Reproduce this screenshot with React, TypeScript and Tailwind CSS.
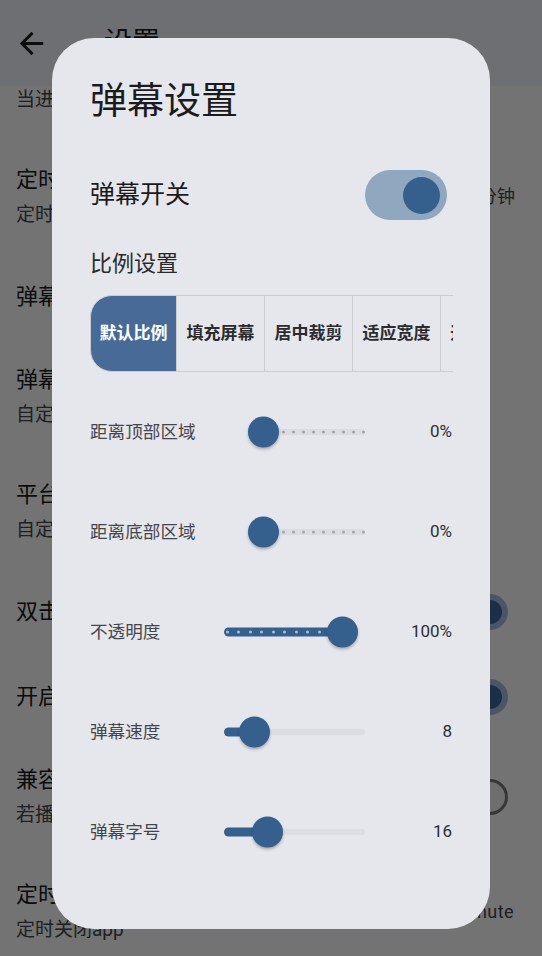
import type { ReactNode } from "react";

interface PageItem {
  title: string;
  sub?: string;
  right?: ReactNode;
}

const pageItems: PageItem[] = [
  { title: "自动全屏", sub: "当进入直播间时自动全屏播放" },
  {
    title: "定时刷新",
    sub: "定时刷新关注列表",
    right: <span className="pr-[27px] text-[18px] text-[#44474e]">10分钟</span>,
  },
  { title: "弹幕屏蔽" },
  { title: "弹幕设置", sub: "自定义弹幕样式" },
  { title: "平台设置", sub: "自定义平台显示顺序" },
  { title: "双击全屏", right: <PageSwitch on /> },
  { title: "开启硬件解码", right: <PageSwitch on /> },
  { title: "兼容模式", sub: "若播放卡顿可尝试开启", right: <PageSwitch /> },
  {
    title: "定时关闭",
    sub: "定时关闭app",
    right: <span className="pr-[28px] text-[18px] tracking-wide text-[#44474e]">30 minute</span>,
  },
];

const segments = ["默认比例", "填充屏幕", "居中裁剪", "适应宽度", "适应高度"];

export default function App() {
  return (
    <div className="relative h-[956px] w-[542px] overflow-hidden bg-white font-['Roboto','Noto_Sans_CJK_SC',sans-serif]">
      {/* Settings page behind the dialog */}
      <div className="pt-[24px]">
        {pageItems.map((item) => (
          <SettingRow key={item.title} {...item} />
        ))}
      </div>

      {/* Top app bar, overlays scrolled list */}
      <div className="absolute inset-x-0 top-0 flex h-[86px] items-center bg-[#f4f7ff] pl-[14px]">
        <svg viewBox="0 0 24 24" className="size-[35px] fill-[#1a1c1e]">
          <path d="M20 11H7.83l5.59-5.59L12 4l-8 8 8 8 1.41-1.41L7.83 13H20v-2z" />
        </svg>
        <span className="ml-[55px] text-[28px] text-[#1a1c1e]">设置</span>
      </div>

      {/* Scrim */}
      <div className="absolute inset-0 bg-black/55" />

      {/* Dialog */}
      <div className="absolute inset-0 flex items-start justify-center pt-[38px]">
        <DanmakuDialog />
      </div>
    </div>
  );
}

function SettingRow({ title, sub, right }: PageItem) {
  return (
    <div className={`flex items-center justify-between pl-4 ${sub ? "h-[115px]" : "h-[85px]"}`}>
      <div>
        <div className="text-[22px] leading-[35px] text-[#1a1c1e]">{title}</div>
        {sub && <div className="text-[19px] leading-[35px] text-[#44474e]">{sub}</div>}
      </div>
      {right}
    </div>
  );
}

function PageSwitch({ on = false }: { on?: boolean }) {
  return on ? (
    <div className="mr-[34px] flex h-[36px] w-[60px] items-center justify-end rounded-full bg-[#a4bfe7] pr-[6px]">
      <div className="size-[24px] rounded-full bg-[#3c68a2]" />
    </div>
  ) : (
    <div className="mr-[34px] flex h-[36px] w-[60px] items-center rounded-full border-[3px] border-[#7a7a7e] bg-[#f4f4f6] pl-[5px]">
      <div className="size-[16px] rounded-full bg-[#7a7a7e]" />
    </div>
  );
}

function DanmakuDialog() {
  return (
    <div className="h-[891px] w-[438px] rounded-[42px] bg-[#e6e7ec] pl-[38px] pr-[37px] pt-[42px]">
      <h2 className="text-[37px] leading-[44px] text-[#1b1b1f]">弹幕设置</h2>

      <div className="mt-[46px] flex h-[50px] items-center justify-between">
        <span className="text-[25px] text-[#1b1b1f]">弹幕开关</span>
        <div className="mr-[6px] flex h-[50px] w-[82px] items-center justify-end rounded-full bg-[#8fa7bf] pr-[7px]">
          <div className="size-[37px] rounded-full bg-[#35608e]" />
        </div>
      </div>

      <div className="mt-[29px] text-[22px] leading-[30px] text-[#2a2a2e]">比例设置</div>

      <div className="mt-[16px] h-[77px] w-full overflow-hidden">
        <div className="flex h-full w-max">
          {segments.map((label, i) =>
            i === 0 ? (
              <div
                key={label}
                className="flex h-full w-[87px] items-center justify-center rounded-l-[22px] border border-[#cbccd2] bg-[#476b96] text-[17px] font-bold text-white"
              >
                {label}
              </div>
            ) : (
              <div
                key={label}
                className="flex h-full w-[88px] items-center justify-center border-y border-r border-[#cbccd2] text-[17px] font-bold text-[#2c2c30]"
              >
                {label}
              </div>
            ),
          )}
        </div>
      </div>

      <div className="mt-[10px]">
        <SliderRow label="距离顶部区域" labelWidth="w-[157px]" value="0%">
          <Slider width="w-[118px]" thumb={16} dots={range(9, 36, 10)} dotColor="bg-[#a3a4ab]" />
        </SliderRow>
        <SliderRow label="距离底部区域" labelWidth="w-[157px]" value="0%">
          <Slider width="w-[118px]" thumb={16} dots={range(9, 36, 10)} dotColor="bg-[#a3a4ab]" />
        </SliderRow>
        <SliderRow label="不透明度" labelWidth="w-[134px]" value="100%">
          <Slider
            width="w-[141px]"
            thumb={118}
            active
            hideInactive
            dots={range(9, 3, 11.5)}
            dotColor="bg-[#a9bcd3]"
          />
        </SliderRow>
        <SliderRow label="弹幕速度" labelWidth="w-[134px]" value="8">
          <Slider width="w-[141px]" thumb={30} active />
        </SliderRow>
        <SliderRow label="弹幕字号" labelWidth="w-[134px]" value="16">
          <Slider width="w-[141px]" thumb={43} active />
        </SliderRow>
      </div>
    </div>
  );
}

function range(n: number, start: number, step: number) {
  return Array.from({ length: n }, (_, i) => start + i * step);
}

function SliderRow({
  label,
  labelWidth,
  value,
  children,
}: {
  label: string;
  labelWidth: string;
  value: string;
  children: ReactNode;
}) {
  return (
    <div className="flex h-[100px] items-center">
      <span className={`${labelWidth} shrink-0 text-[17.6px] text-[#45464c]`}>{label}</span>
      {children}
      <span className="flex-1 pr-px text-right text-[17px] text-[#2e2f33]">{value}</span>
    </div>
  );
}

function Slider({
  width,
  thumb,
  active = false,
  hideInactive = false,
  dots = [],
  dotColor = "",
}: {
  width: string;
  thumb: number;
  active?: boolean;
  hideInactive?: boolean;
  dots?: number[];
  dotColor?: string;
}) {
  return (
    <div className={`relative h-[32px] shrink-0 ${width}`}>
      {!hideInactive && (
        <div
          className="absolute right-0 top-1/2 h-[6px] -translate-y-1/2 rounded-r-full bg-[#dcdde3]"
          style={{ left: thumb }}
        />
      )}
      {active && (
        <div
          className="absolute left-0 top-1/2 h-[9px] -translate-y-1/2 rounded-full bg-[#35608e]"
          style={{ width: thumb }}
        />
      )}
      {dots.map((x) => (
        <div
          key={x}
          className={`absolute top-1/2 size-[3px] -translate-y-1/2 rounded-full ${dotColor}`}
          style={{ left: x - 1.5 }}
        />
      ))}
      <div
        className="absolute top-1/2 size-[31px] -translate-y-1/2 rounded-full bg-[#35608e] shadow-[0_2px_3px_rgba(0,0,0,0.25)]"
        style={{ left: thumb - 15.5 }}
      />
    </div>
  );
}
